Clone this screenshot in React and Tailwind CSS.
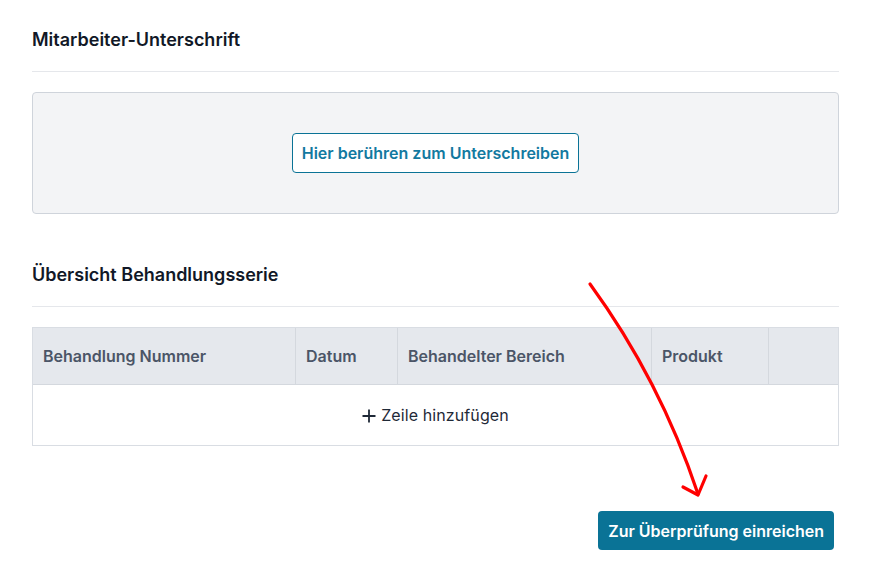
import React from 'react'

const columns = [
  { label: 'Behandlung Nummer', width: 'w-[263px]' },
  { label: 'Datum', width: 'w-[102px]' },
  { label: 'Behandelter Bereich', width: 'w-[254px]' },
  { label: 'Produkt', width: 'w-[117px]' },
  { label: '', width: 'flex-1' },
]

function SectionTitle({ children }) {
  return (
    <div className="border-b border-gray-200 pb-[19px]">
      <h2 className="text-lg leading-6 font-semibold text-[#111827]">{children}</h2>
    </div>
  )
}

export default function App() {
  return (
    <div
      className="relative w-[872px] h-[570px] bg-white overflow-hidden"
      style={{ fontFamily: 'Inter, "Noto Sans", sans-serif' }}
    >
      <div className="ml-8 w-[807px] pt-7">
        <SectionTitle>Mitarbeiter-Unterschrift</SectionTitle>

        {/* signature pad */}
        <div className="mt-5 h-[122px] bg-[#f3f4f6] border border-[#cfd4db] rounded-[4px] flex items-center justify-center">
          <button className="h-10 px-[9px] bg-white border border-[#0a7396] rounded-[4px] text-base font-semibold text-[#1279a0]">
            Hier berühren zum Unterschreiben
          </button>
        </div>

        <div className="mt-[49px]">
          <SectionTitle>Übersicht Behandlungsserie</SectionTitle>
        </div>

        {/* table */}
        <div className="mt-5 border border-[#d9dde3]">
          <div className="flex h-[57px] bg-[#e5e8ed] border-b border-[#d4d8de]">
            {columns.map((c, i) => (
              <div
                key={i}
                className={`${c.width} flex items-center px-[10px] text-base font-semibold text-[#4b5567] ${
                  i < columns.length - 1 ? 'border-r border-[#d4d8de]' : ''
                }`}
              >
                {c.label}
              </div>
            ))}
          </div>
          <div className="h-[60px] flex items-center justify-center gap-[5px] text-base text-[#1f2937]">
            <svg width="14" height="14" viewBox="0 0 14 14" className="mt-[1px]">
              <path d="M7 0.5v13M0.5 7h13" stroke="#1f2937" strokeWidth="1.8" />
            </svg>
            <span className="tracking-[0.1px]">Zeile hinzufügen</span>
          </div>
        </div>

        <div className="mt-[65px] flex justify-end pr-[5px]">
          <button className="h-[39px] px-[10px] bg-[#0a7396] rounded-[4px] text-base font-semibold text-white">
            Zur Überprüfung einreichen
          </button>
        </div>
      </div>

      {/* red annotation arrow */}
      <svg className="absolute left-0 top-0 pointer-events-none" width="872" height="570">
        <path
          d="M590 284 Q 660 380 698 494"
          fill="none"
          stroke="#ff0000"
          strokeWidth="3.2"
          strokeLinecap="round"
        />
        <path
          d="M683 487 L698 495 L706 476"
          fill="none"
          stroke="#ff0000"
          strokeWidth="3.2"
          strokeLinecap="round"
          strokeLinejoin="round"
        />
      </svg>
    </div>
  )
}
